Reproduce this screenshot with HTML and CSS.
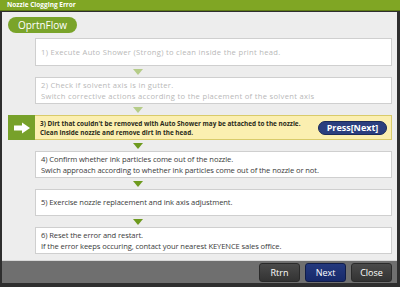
FILE: index.html
```html
<!DOCTYPE html>
<html lang="en">
<head>
<meta charset="UTF-8">
<title>Nozzle Clogging Error</title>
<link rel="stylesheet" href="styles.css">
</head>
<body>
<div class="window">
  <div class="titlebar">Nozzle Clogging Error</div>

  <div class="content">
    <div class="flow-label">OprtnFlow</div>

    <div class="steps">
      <div class="step done">
        <p>1) Execute Auto Shower (Strong) to clean inside the print head.</p>
      </div>
      <div class="tri done"></div>
      <div class="step done">
        <p>2) Check if solvent axis is in gutter.</p>
        <p>Switch corrective actions according to the placement of the solvent axis</p>
      </div>
      <div class="tri done"></div>

      <div class="current">
        <div class="cur-icon">
          <svg width="18" height="12" viewBox="0 0 18 12">
            <path d="M1 3.5 H9 V0.5 L17 6 L9 11.5 V8.5 H1 Z" fill="#fff"/>
          </svg>
        </div>
        <div class="cur-text">
          <p>3) Dirt that couldn't be removed with Auto Shower may be attached to the nozzle.</p>
          <p>Clean inside nozzle and remove dirt in the head.</p>
        </div>
        <div class="press">Press[Next]</div>
      </div>

      <div class="tri"></div>
      <div class="step">
        <p>4) Confirm whether ink particles come out of the nozzle.</p>
        <p>Swich approach according to whether ink particles come out of the nozzle or not.</p>
      </div>
      <div class="tri"></div>
      <div class="step">
        <p>5) Exercise nozzle replacement and ink axis adjustment.</p>
      </div>
      <div class="tri"></div>
      <div class="step">
        <p>6) Reset the error and restart.</p>
        <p>If the error keeps occuring, contact your nearest KEYENCE sales office.</p>
      </div>
    </div>
  </div>

  <div class="footer">
    <button class="btn">Rtrn</button>
    <button class="btn btn-next">Next</button>
    <button class="btn">Close</button>
  </div>
</div>
</body>
</html>
```

FILE: styles.css
```css
body {
  margin: 0;
  font-family: "Open Sans", "DejaVu Sans", sans-serif;
  background: #2e2e2e;
}

.window {
  width: 400px;
  height: 287px;
  display: flex;
  flex-direction: column;
  background: #2e2e2e;
  box-sizing: border-box;
  padding: 0 3px 4px 2px;
}

.titlebar {
  height: 10px;
  margin: 0 -3px 1px -2px;
  padding-left: 7px;
  background: #80a624;
  border-bottom: 1px solid #5d7a16;
  color: #fff;
  font-size: 6.5px;
  font-weight: bold;
  line-height: 10px;
}

.content {
  background: #ededed;
  padding: 5px 5px 6px 6px;
  border-bottom: 1px solid #d8d8d8;
}

.flow-label {
  width: 69px;
  height: 16px;
  border-radius: 8px;
  background: #7aa42a;
  color: #fff;
  font-size: 10px;
  line-height: 16px;
  text-align: center;
}

.steps {
  margin-top: 5px;
  display: flex;
  flex-direction: column;
}

.step {
  margin-left: 27px;
  height: 27px;
  box-sizing: border-box;
  background: #fff;
  border: 1px solid #cfcfcf;
  padding: 0 5px;
  display: flex;
  flex-direction: column;
  justify-content: center;
  color: #3a3a3a;
  font-size: 7.6px;
  letter-spacing: -0.1px;
}

.step p {
  margin: 0;
  line-height: 11px;
  white-space: nowrap;
}

.step.done {
  color: #b8b8b8;
  letter-spacing: 0.3px;
}

.step:first-child {
  height: 28px;
}

.tri {
  height: 11px;
  margin-left: 125px;
  display: flex;
  align-items: center;
}

.tri::before {
  content: "";
  border-left: 5px solid transparent;
  border-right: 5px solid transparent;
  border-top: 6px solid #6e9a1e;
}

.tri.done::before {
  border-top-color: #b5cc88;
}

.current {
  height: 25px;
  display: flex;
  align-items: stretch;
  background: #fbefb0;
  border: 1px solid #d9cb6a;
  box-sizing: border-box;
}

.cur-icon {
  width: 27px;
  background: #77a12a;
  display: flex;
  align-items: center;
  justify-content: center;
  margin: -1px 0 -1px -1px;
}

.cur-text {
  flex: 1;
  padding-left: 5px;
  display: flex;
  flex-direction: column;
  justify-content: center;
  font-size: 6.4px;
  font-weight: bold;
  color: #2a2a1a;
}

.cur-text p {
  margin: 0;
  line-height: 9px;
  white-space: nowrap;
}

.press {
  align-self: center;
  width: 69px;
  height: 14px;
  margin-right: 4px;
  border-radius: 7px;
  background: #2b3f7e;
  border: 1px solid #1b2a5a;
  box-sizing: border-box;
  color: #fff;
  font-size: 9px;
  font-weight: bold;
  line-height: 12px;
  text-align: center;
}

.footer {
  flex: 1;
  background: #6f6f6f;
  display: flex;
  justify-content: flex-end;
  align-items: center;
  gap: 5px;
  padding-right: 5px;
}

.btn {
  width: 41px;
  height: 19px;
  padding: 0;
  border: 1px solid #2a2a2a;
  border-radius: 3px;
  background: linear-gradient(#4a4a4a, #333);
  color: #fff;
  font-family: "Open Sans", "DejaVu Sans", sans-serif;
  font-size: 9px;
}

.btn-next {
  background: linear-gradient(#24397e, #17296a);
  border-color: #101c48;
}
```
